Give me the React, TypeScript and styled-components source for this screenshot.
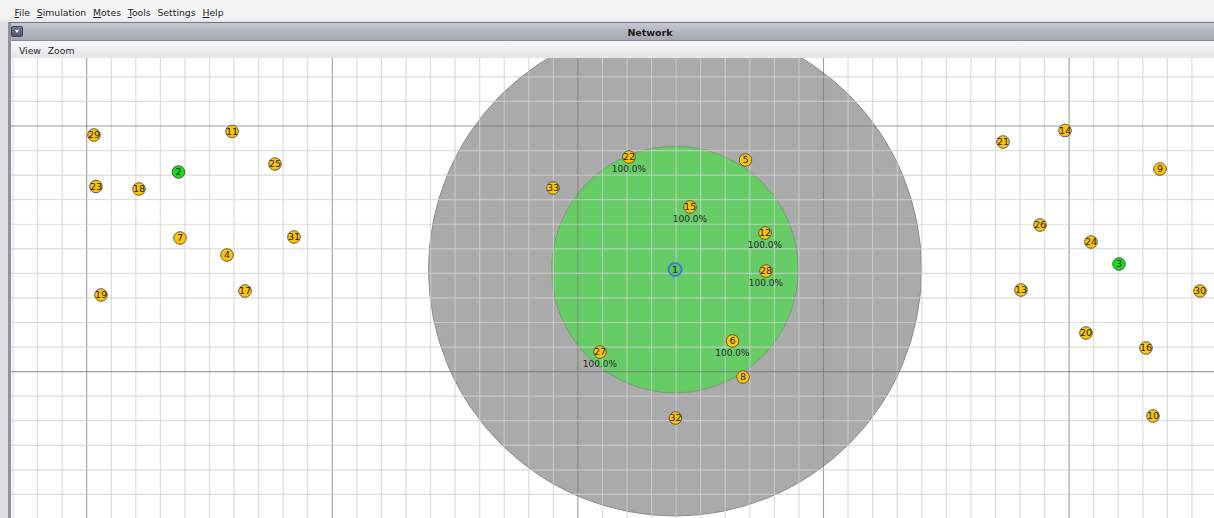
import React from "react";
import styled, { createGlobalStyle } from "styled-components";

const Global = createGlobalStyle`
  html, body { margin: 0; padding: 0; }
  body {
    background: #dedfe2;
    overflow: hidden;
    font-family: "DejaVu Sans", "Liberation Sans", sans-serif;
  }
`;

const Desktop = styled.div`
  width: 100vw;
  height: 100vh;
  overflow: hidden;
  display: flex;
  flex-direction: column;
  background: #dedfe2;
`;

const MenuBar = styled.div`
  height: 22px;
  flex: none;
  box-sizing: border-box;
  padding: 3px 0 0 11px;
  display: flex;
  align-items: center;
  background: linear-gradient(#f4f4f4 80%, #e6e6e7);
  font-size: 9.3px;
  color: #1e1e1e;
`;

const MenuItem = styled.span`
  padding: 0 3.4px;
  line-height: 19px;
  white-space: nowrap;
  u { text-decoration: underline; text-underline-offset: 1px; }
`;

const InternalFrame = styled.div`
  margin-left: 8px;
  width: 1278px;
  flex: 1;
  display: flex;
  flex-direction: column;
  border-top: 1px solid #72757c;
  border-left: 3px solid #8d939f;
  box-shadow: inset 1px 0 0 #70757f;
  min-height: 0;
`;

const TitleBar = styled.div`
  height: 18px;
  flex: none;
  position: relative;
  display: flex;
  align-items: center;
  justify-content: center;
  padding-top: 2px;
  box-sizing: border-box;
  background: linear-gradient(#c6c9cf, #b1b4bb 55%, #a6a9b1);
  border-bottom: 1px solid #888b92;
`;

const FrameMenuButton = styled.div`
  position: absolute;
  left: 0;
  top: 3px;
  width: 12px;
  height: 11px;
  box-sizing: border-box;
  border-radius: 2px;
  border: 1px solid #3d4454;
  background: linear-gradient(#76819a, #4d566b);
  display: flex;
  align-items: center;
  justify-content: center;

  &::after {
    content: "";
    border-left: 2.5px solid transparent;
    border-right: 2.5px solid transparent;
    border-top: 3px solid #ffffff;
  }
`;

const Title = styled.span`
  font-weight: bold;
  font-size: 9.5px;
  color: #1c1c1c;
`;

const FrameMenu = styled.div`
  height: 17px;
  flex: none;
  display: flex;
  align-items: center;
  padding: 1px 0 0 4.5px;
  box-sizing: border-box;
  background: linear-gradient(#f8f8f9, #e5e5e9);
  font-size: 9.3px;
  color: #2a2a2a;
`;

const CanvasArea = styled.svg`
  display: block;
  flex: none;
  background: #ffffff;
`;

const MoteId = styled.text`
  font-family: "DejaVu Sans", sans-serif;
  font-size: 9.5px;
  fill: #1d1d1d;
  text-anchor: middle;
`;

const Ratio = styled.text`
  font-family: "DejaVu Sans", sans-serif;
  font-size: 9px;
  fill: #2b2b2b;
  text-anchor: middle;
`;

type Kind = "mote" | "sink" | "selected";

interface Mote {
  id: number;
  x: number;
  y: number;
  kind?: Kind;
  ratio?: string;
}

const motes: Mote[] = [
  { id: 29, x: 94, y: 135 },
  { id: 11, x: 232, y: 131.5 },
  { id: 2, x: 178.5, y: 172, kind: "sink" },
  { id: 25, x: 275, y: 164 },
  { id: 23, x: 96, y: 186.5 },
  { id: 18, x: 139, y: 189 },
  { id: 7, x: 180, y: 238 },
  { id: 4, x: 227, y: 255 },
  { id: 31, x: 294, y: 237 },
  { id: 19, x: 101, y: 295 },
  { id: 17, x: 245, y: 291 },
  { id: 33, x: 553, y: 188 },
  { id: 22, x: 629, y: 157, ratio: "100.0%" },
  { id: 5, x: 745.5, y: 160 },
  { id: 15, x: 690, y: 207, ratio: "100.0%" },
  { id: 12, x: 765, y: 233, ratio: "100.0%" },
  { id: 28, x: 766, y: 271, ratio: "100.0%" },
  { id: 6, x: 732.5, y: 341, ratio: "100.0%" },
  { id: 27, x: 600, y: 352, ratio: "100.0%" },
  { id: 8, x: 743, y: 377 },
  { id: 32, x: 675.5, y: 418 },
  { id: 21, x: 1003, y: 142 },
  { id: 14, x: 1065, y: 130.5 },
  { id: 9, x: 1160, y: 169 },
  { id: 26, x: 1040, y: 225 },
  { id: 24, x: 1091, y: 242 },
  { id: 3, x: 1119, y: 264, kind: "sink" },
  { id: 13, x: 1021, y: 290 },
  { id: 30, x: 1200, y: 291 },
  { id: 20, x: 1086, y: 333 },
  { id: 16, x: 1146, y: 348 },
  { id: 10, x: 1153, y: 416 },
  { id: 1, x: 675, y: 269.5, kind: "selected" },
];

// Visible area of the network view, in window coordinates.
const VIEW_X = 11;
const VIEW_Y = 58;
const VIEW_W = 1275;
const VIEW_H = 460;

const STEP = 24.56;
const ORIGIN_X = 86.7;
const ORIGIN_Y = 126;

const MINOR = "rgba(208,208,208,0.72)";
const MAJOR = "rgba(120,120,120,0.72)";

function gridLines() {
  const lines: React.ReactElement[] = [];
  for (let k = -4; k < 50; k++) {
    const x = ORIGIN_X + STEP * k;
    if (x < VIEW_X || x > VIEW_X + VIEW_W) continue;
    const major = k % 10 === 0;
    lines.push(
      <line
        key={`v${k}`}
        x1={x}
        x2={x}
        y1={VIEW_Y}
        y2={VIEW_Y + VIEW_H}
        stroke={major ? MAJOR : MINOR}
        strokeWidth={major ? 1.1 : 1.2}
      />
    );
  }
  for (let k = -3; k < 18; k++) {
    const y = ORIGIN_Y + STEP * k;
    if (y < VIEW_Y || y > VIEW_Y + VIEW_H) continue;
    const major = k % 10 === 0;
    lines.push(
      <line
        key={`h${k}`}
        x1={VIEW_X}
        x2={VIEW_X + VIEW_W}
        y1={y}
        y2={y}
        stroke={major ? MAJOR : MINOR}
        strokeWidth={major ? 1.1 : 1.2}
      />
    );
  }
  return lines;
}

function MoteMark({ m }: { m: Mote }) {
  const kind = m.kind ?? "mote";
  const fill = kind === "sink" ? "#14e014" : kind === "selected" ? "#5cc25c" : "#ffc600";
  const stroke = kind === "selected" ? "#3b7fd9" : "#4e4e4e";
  return (
    <g>
      <circle
        cx={m.x}
        cy={m.y}
        r={kind === "selected" ? 6.5 : 6.3}
        fill={fill}
        stroke={stroke}
        strokeWidth={kind === "selected" ? 2 : 0.9}
      />
      <MoteId x={m.x} y={m.y + 3.4}>
        {m.id}
      </MoteId>
      {m.ratio && (
        <Ratio x={m.x} y={m.y + 14.5}>
          {m.ratio}
        </Ratio>
      )}
    </g>
  );
}

export default function App() {
  const center = { x: 675, y: 269.5 };
  return (
    <>
      <Global />
      <Desktop>
        <MenuBar>
          <MenuItem><u>F</u>ile</MenuItem>
          <MenuItem><u>S</u>imulation</MenuItem>
          <MenuItem><u>M</u>otes</MenuItem>
          <MenuItem><u>T</u>ools</MenuItem>
          <MenuItem>Settings</MenuItem>
          <MenuItem><u>H</u>elp</MenuItem>
        </MenuBar>
        <InternalFrame>
          <TitleBar>
            <FrameMenuButton />
            <Title>Network</Title>
          </TitleBar>
          <FrameMenu>
            <MenuItem>View</MenuItem>
            <MenuItem>Zoom</MenuItem>
          </FrameMenu>
          <CanvasArea
            width={VIEW_W}
            height={VIEW_H}
            viewBox={`${VIEW_X} ${VIEW_Y} ${VIEW_W} ${VIEW_H}`}
          >
            {/* interference range, then transmission range of the selected mote */}
            <circle cx={center.x} cy={center.y} r={246.5} fill="#aaaaaa" stroke="#8e8e8e" strokeWidth={1} />
            <circle cx={center.x} cy={center.y} r={123.3} fill="#66cc66" stroke="#7f9a7f" strokeWidth={1} />
            {gridLines()}
            {motes.map((m) => (
              <MoteMark key={m.id} m={m} />
            ))}
          </CanvasArea>
        </InternalFrame>
      </Desktop>
    </>
  );
}
